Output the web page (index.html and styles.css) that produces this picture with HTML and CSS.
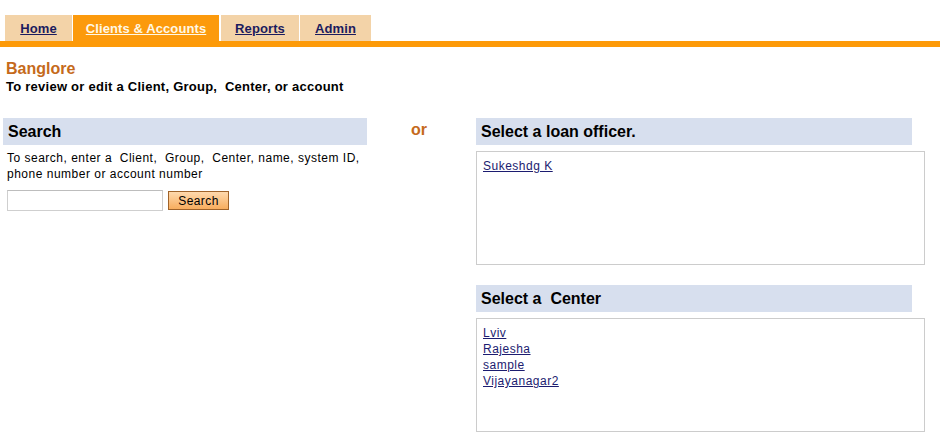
FILE: index.html
```html
<!DOCTYPE html>
<html>
<head>
<meta charset="utf-8">
<link rel="stylesheet" href="styles.css">
</head>
<body>
<div class="nav">
  <a class="tab tab-home" href="#">Home</a>
  <a class="tab tab-active" href="#">Clients &amp; Accounts</a>
  <a class="tab tab-reports" href="#">Reports</a>
  <a class="tab tab-admin" href="#">Admin</a>
</div>
<div class="bar"></div>
<div class="intro">
  <div class="branch">Banglore</div>
  <div class="lead">To review or edit a Client, Group,&nbsp; Center, or account</div>
</div>
<div class="main">
  <div class="left">
    <div class="head head-search">Search</div>
    <div class="desc">To search, enter a&nbsp; Client,&nbsp; Group,&nbsp; Center, name, system ID, phone number or account number</div>
    <div class="form">
      <input class="field" type="text">
      <button class="btn">Search</button>
    </div>
  </div>
  <div class="or">or</div>
  <div class="right">
    <div class="head">Select a loan officer.</div>
    <div class="box">
      <a href="#">Sukeshdg K</a>
    </div>
    <div class="head head-center">Select a&nbsp; Center</div>
    <div class="box">
      <a href="#">Lviv</a>
      <a href="#">Rajesha</a>
      <a href="#">sample</a>
      <a href="#">Vijayanagar2</a>
    </div>
  </div>
</div>
</body>
</html>
```

FILE: styles.css
```css
html, body {
  margin: 0;
  padding: 0;
  background: #ffffff;
  font-family: "Liberation Sans", Arial, sans-serif;
  color: #000;
}

.nav {
  display: flex;
  gap: 1px;
  padding: 15px 0 0 5px;
}

.tab {
  display: block;
  box-sizing: border-box;
  height: 26px;
  line-height: 26px;
  padding-top: 1px;
  font-size: 13px;
  font-weight: bold;
  color: #1b1b5e;
  background: #f3d3a8;
  text-decoration: underline;
  text-align: center;
  letter-spacing: 0.1px;
}

.tab-home { width: 67px; }
.tab-active {
  width: 146px;
  background: #fc9a0c;
  color: #fff8e6;
}
.tab-reports { width: 78px; margin-left: 1px; }
.tab-admin { width: 71px; }

.bar {
  height: 6px;
  background: #fd9a08;
}

.intro {
  padding: 13px 0 0 6px;
}

.branch {
  font-size: 16px;
  font-weight: bold;
  color: #c56a1b;
  line-height: 18px;
}

.lead {
  font-size: 13px;
  font-weight: bold;
  line-height: 16px;
  margin-top: 1px;
  letter-spacing: 0.25px;
}

.main {
  display: flex;
  align-items: flex-start;
  padding: 23px 0 0 3px;
}

.left {
  width: 364px;
}

.head {
  height: 27px;
  line-height: 28px;
  background: #d7dfee;
  font-size: 16px;
  font-weight: bold;
  padding-left: 5px;
  width: 431px;
}

.head-search {
  width: auto;
}

.desc {
  font-size: 12px;
  line-height: 16px;
  letter-spacing: 0.5px;
  padding: 5px 0 0 4px;
}

.form {
  display: flex;
  align-items: flex-start;
  gap: 5px;
  padding: 8px 0 0 4px;
}

.field {
  box-sizing: border-box;
  width: 156px;
  height: 21px;
  margin: 0;
  border: 1px solid #cfcfcf;
  border-top-color: #bdbdbd;
  background: #fff;
}

.btn {
  box-sizing: border-box;
  width: 61px;
  height: 19px;
  margin-top: 1px;
  padding: 0;
  border: 1px solid #a0632a;
  background: linear-gradient(#ffd9ad, #f8ad5e);
  font-family: "Liberation Sans", Arial, sans-serif;
  font-size: 12px;
  letter-spacing: 0.4px;
  color: #000;
}

.or {
  width: 65px;
  padding: 3px 0 0 44px;
  font-size: 16px;
  font-weight: bold;
  color: #c56a1b;
}

.right {
  width: 449px;
}

.box {
  box-sizing: border-box;
  height: 114px;
  margin-top: 6px;
  border: 1px solid #cccccc;
  padding: 6px 0 0 6px;
  display: flex;
  flex-direction: column;
  align-items: flex-start;
}

.box a {
  font-size: 12px;
  line-height: 16px;
  letter-spacing: 0.5px;
  color: #1c1c70;
  text-decoration: underline;
}

.head-center {
  margin-top: 20px;
}
```
